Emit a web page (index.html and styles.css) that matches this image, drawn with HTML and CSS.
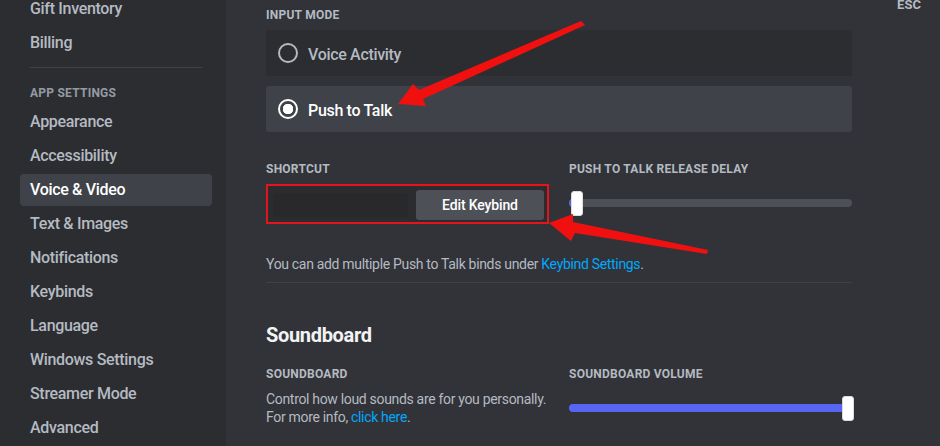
FILE: index.html
```html
<!DOCTYPE html>
<html lang="en">
<head>
  <meta charset="UTF-8">
  <title>Voice &amp; Video Settings</title>
  <link rel="stylesheet" href="styles.css">
</head>
<body>
<div class="settings-layout">
  <nav class="sidebar">
    <div class="nav-list">
      <div class="nav-item">Gift Inventory</div>
      <div class="nav-item">Billing</div>
      <div class="nav-divider"></div>
      <div class="nav-header">App Settings</div>
      <div class="nav-item">Appearance</div>
      <div class="nav-item">Accessibility</div>
      <div class="nav-item selected">Voice &amp; Video</div>
      <div class="nav-item">Text &amp; Images</div>
      <div class="nav-item">Notifications</div>
      <div class="nav-item">Keybinds</div>
      <div class="nav-item">Language</div>
      <div class="nav-item">Windows Settings</div>
      <div class="nav-item">Streamer Mode</div>
      <div class="nav-item">Advanced</div>
    </div>
  </nav>

  <main class="content">
    <div class="content-column">
      <h5 class="field-label">Input Mode</h5>
      <div class="radio-option">
        <span class="radio"></span>
        <span class="radio-text">Voice Activity</span>
      </div>
      <div class="radio-option checked">
        <span class="radio"></span>
        <span class="radio-text">Push to Talk</span>
      </div>

      <div class="field-row shortcut-row">
        <div class="field-col">
          <h5 class="field-label">Shortcut</h5>
          <div class="keybind-recorder">
            <div class="keybind-input"></div>
            <button class="keybind-button">Edit Keybind</button>
          </div>
        </div>
        <div class="field-col">
          <h5 class="field-label">Push to Talk Release Delay</h5>
          <div class="slider">
            <div class="slider-track">
              <div class="slider-fill" style="width: 4px;"></div>
            </div>
            <div class="slider-grabber" style="left: 2px;"></div>
          </div>
        </div>
      </div>

      <p class="field-note">You can add multiple Push to Talk binds under <a href="#">Keybind Settings</a>.</p>
      <div class="section-divider"></div>

      <h2 class="section-title">Soundboard</h2>
      <div class="field-row">
        <div class="field-col">
          <h5 class="field-label">Soundboard</h5>
          <p class="field-desc">Control how loud sounds are for you personally.<br>For more info, <a href="#">click here</a>.</p>
        </div>
        <div class="field-col">
          <h5 class="field-label">Soundboard Volume</h5>
          <div class="slider volume">
            <div class="slider-track">
              <div class="slider-fill" style="width: 100%;"></div>
            </div>
            <div class="slider-grabber" style="left: 273px;"></div>
          </div>
        </div>
      </div>
    </div>

    <div class="tools">
      <span class="esc-label">ESC</span>
    </div>
  </main>
</div>

<svg class="annotations" width="940" height="446" viewBox="0 0 940 446">
  <polygon points="398,104 413,84 419,90 581,21 585,25 423,99 426,106" fill="#f01010"/>
  <polygon points="549,223 573,214 573,222 708,250 707,254 575,233 571,241" fill="#f01010"/>
</svg>
</body>
</html>
```

FILE: styles.css
```css
body {
  margin: 0;
  background-color: #313338;
  color: #dbdee1;
  font-family: Roboto, "Noto Sans", sans-serif;
  letter-spacing: -0.02em;
  overflow: hidden;
}

.settings-layout {
  display: flex;
  height: 446px;
}

/* sidebar */

.sidebar {
  width: 226px;
  flex: none;
  box-sizing: border-box;
  padding: 0 14px 0 20px;
  background-color: #2b2d31;
}

.nav-list {
  margin-top: -7px;
}

.nav-item {
  padding: 6px 10px;
  margin-bottom: 2px;
  border-radius: 4px;
  font-size: 16px;
  line-height: 20px;
  font-weight: 500;
  color: #b5bac1;
}

.nav-item.selected {
  background-color: #404249;
  color: #ffffff;
}

.nav-divider {
  height: 1px;
  margin: 8px 10px 0;
  background-color: #3f4147;
}

.nav-header {
  margin-top: 11px;
  padding: 6px 10px 5px;
  font-size: 12px;
  line-height: 16px;
  font-weight: 700;
  text-transform: uppercase;
  letter-spacing: 0.02em;
  color: #949ba4;
}

/* main content */

.content {
  flex: 1;
  display: flex;
  padding: 7px 0 0 40px;
}

.content-column {
  width: 586px;
  flex: none;
}

.field-label {
  margin: 0 0 7px;
  font-size: 12px;
  line-height: 16px;
  font-weight: 700;
  text-transform: uppercase;
  letter-spacing: 0.02em;
  color: #b5bac1;
}

.radio-option {
  display: flex;
  align-items: center;
  gap: 10px;
  height: 46px;
  padding: 0 12px;
  margin-bottom: 10px;
  border-radius: 3px;
  background-color: #2b2d31;
}

.radio-option.checked {
  background-color: #404249;
}

.radio {
  width: 20px;
  height: 20px;
  box-sizing: border-box;
  border: 2px solid #b5bac1;
  border-radius: 50%;
}

.radio-option.checked .radio {
  border-color: #ffffff;
  background: radial-gradient(circle, #ffffff 0 5px, transparent 5.5px);
}

.radio-text {
  padding-top: 2px;
  font-size: 16px;
  font-weight: 500;
  color: #b5bac1;
}

.radio-option.checked .radio-text {
  color: #ffffff;
}

.field-row {
  display: flex;
  gap: 20px;
}

.shortcut-row {
  margin-top: 29px;
}

.field-col {
  flex: 1;
  min-width: 0;
}

.keybind-recorder {
  display: flex;
  align-items: center;
  gap: 8px;
  height: 40px;
  box-sizing: border-box;
  padding: 4px 3px 2px 5px;
  border: 2px solid #e3141c;
  background-color: #2b2c30;
}

.keybind-input {
  flex: 1;
  height: 24px;
  border-radius: 4px;
  background-color: #29292b;
}

.keybind-button {
  width: 128px;
  height: 30px;
  border: none;
  border-radius: 3px;
  background-color: #4e5058;
  color: #ffffff;
  font-family: inherit;
  font-size: 14px;
  font-weight: 500;
  letter-spacing: -0.01em;
}

.slider {
  position: relative;
  height: 24px;
  margin-top: 14px;
}

.slider-track {
  position: absolute;
  left: 0;
  right: 0;
  top: 8px;
  height: 8px;
  border-radius: 4px;
  background-color: #4e5058;
  overflow: hidden;
}

.slider-fill {
  height: 100%;
  background-color: #5865f2;
}

.slider-grabber {
  position: absolute;
  top: 0;
  width: 10px;
  height: 23px;
  border: 1px solid #dcdcdc;
  border-radius: 3px;
  background-color: #ffffff;
}

.volume .slider-track {
  right: 4px;
}

.field-note {
  margin: 31px 0 0;
  font-size: 14px;
  line-height: 18px;
  color: #b5bac1;
}

a {
  color: #00a8fc;
  text-decoration: none;
}

.section-divider {
  height: 1px;
  margin-top: 9px;
  background-color: #3f4147;
}

.section-title {
  margin: 40px 0 19px;
  font-size: 20px;
  line-height: 24px;
  font-weight: 700;
  color: #f2f3f5;
}

.field-desc {
  margin: 0;
  padding-top: 1px;
  font-size: 14px;
  line-height: 18px;
  white-space: nowrap;
  color: #b5bac1;
}

.tools {
  width: 36px;
  margin: -13px 0 0 39px;
  text-align: center;
}

.esc-label {
  font-size: 13px;
  line-height: 16px;
  font-weight: 700;
  letter-spacing: 0;
  color: #b5bac1;
}

/* screenshot annotations */

.annotations {
  position: absolute;
  left: 0;
  top: 0;
  pointer-events: none;
}
```
